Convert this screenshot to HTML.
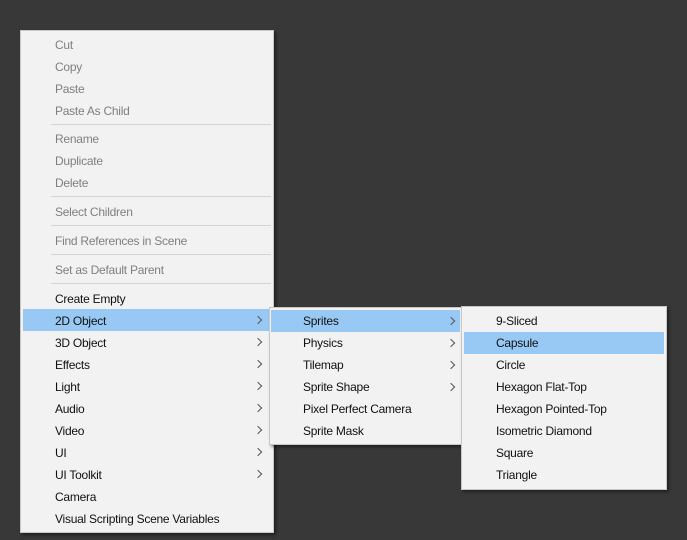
<!DOCTYPE html>
<html><head><style>
body{margin:0;width:687px;height:540px;background:#383838;position:relative;overflow:hidden;font-family:"Liberation Sans",sans-serif;font-size:12px;}
.m{position:absolute;background:#f2f2f2;border:1px solid #c8c8c8;box-shadow:2px 2px 3px rgba(0,0,0,.45);box-sizing:border-box;}
.t{position:absolute;height:22px;line-height:22px;color:#101010;white-space:nowrap;letter-spacing:-0.25px;}
.d{color:#7f7f7f;}
.h{position:absolute;height:22px;background:#98c9f5;}
.s{position:absolute;height:1px;background:#d3d3d3;left:51px;width:220px;}
.a{position:absolute;width:5px;height:5px;border-right:1.2px solid #555;border-top:1.2px solid #555;transform:rotate(45deg);}
</style></head><body>
<div class="m" style="left:20px;top:30px;width:254px;height:503px"></div>
<div class="h" style="left:23px;top:309px;width:247px"></div>
<div class="t d" style="left:55px;top:34px">Cut</div>
<div class="t d" style="left:55px;top:56px">Copy</div>
<div class="t d" style="left:55px;top:78px">Paste</div>
<div class="t d" style="left:55px;top:100px">Paste As Child</div>
<div class="s" style="top:124px"></div>
<div class="t d" style="left:55px;top:128px">Rename</div>
<div class="t d" style="left:55px;top:150px">Duplicate</div>
<div class="t d" style="left:55px;top:172px">Delete</div>
<div class="s" style="top:196px"></div>
<div class="t d" style="left:55px;top:201px">Select Children</div>
<div class="s" style="top:225px"></div>
<div class="t d" style="left:55px;top:230px">Find References in Scene</div>
<div class="s" style="top:254px"></div>
<div class="t d" style="left:55px;top:259px">Set as Default Parent</div>
<div class="s" style="top:283px"></div>
<div class="t" style="left:55px;top:288px">Create Empty</div>
<div class="t" style="left:55px;top:310px">2D Object</div>
<div class="t" style="left:55px;top:332px">3D Object</div>
<div class="t" style="left:55px;top:354px">Effects</div>
<div class="t" style="left:55px;top:376px">Light</div>
<div class="t" style="left:55px;top:398px">Audio</div>
<div class="t" style="left:55px;top:420px">Video</div>
<div class="t" style="left:55px;top:442px">UI</div>
<div class="t" style="left:55px;top:464px">UI Toolkit</div>
<div class="t" style="left:55px;top:486px">Camera</div>
<div class="t" style="left:55px;top:508px">Visual Scripting Scene Variables</div>
<div class="a" style="left:255px;top:317px"></div>
<div class="a" style="left:255px;top:339px"></div>
<div class="a" style="left:255px;top:361px"></div>
<div class="a" style="left:255px;top:383px"></div>
<div class="a" style="left:255px;top:405px"></div>
<div class="a" style="left:255px;top:427px"></div>
<div class="a" style="left:255px;top:449px"></div>
<div class="a" style="left:255px;top:471px"></div>

<div class="m" style="left:269px;top:307px;width:193px;height:138px"></div>
<div class="h" style="left:271px;top:310px;width:189px"></div>
<div class="t" style="left:303px;top:310px">Sprites</div>
<div class="t" style="left:303px;top:332px">Physics</div>
<div class="t" style="left:303px;top:354px">Tilemap</div>
<div class="t" style="left:303px;top:376px">Sprite Shape</div>
<div class="t" style="left:303px;top:398px">Pixel Perfect Camera</div>
<div class="t" style="left:303px;top:420px">Sprite Mask</div>
<div class="a" style="left:448px;top:318px"></div>
<div class="a" style="left:448px;top:340px"></div>
<div class="a" style="left:448px;top:362px"></div>
<div class="a" style="left:448px;top:384px"></div>

<div class="m" style="left:461px;top:306px;width:206px;height:184px"></div>
<div class="h" style="left:464px;top:332px;width:200px"></div>
<div class="t" style="left:496px;top:310px">9-Sliced</div>
<div class="t" style="left:496px;top:332px">Capsule</div>
<div class="t" style="left:496px;top:354px">Circle</div>
<div class="t" style="left:496px;top:376px">Hexagon Flat-Top</div>
<div class="t" style="left:496px;top:398px">Hexagon Pointed-Top</div>
<div class="t" style="left:496px;top:420px">Isometric Diamond</div>
<div class="t" style="left:496px;top:442px">Square</div>
<div class="t" style="left:496px;top:464px">Triangle</div>
</body></html>
